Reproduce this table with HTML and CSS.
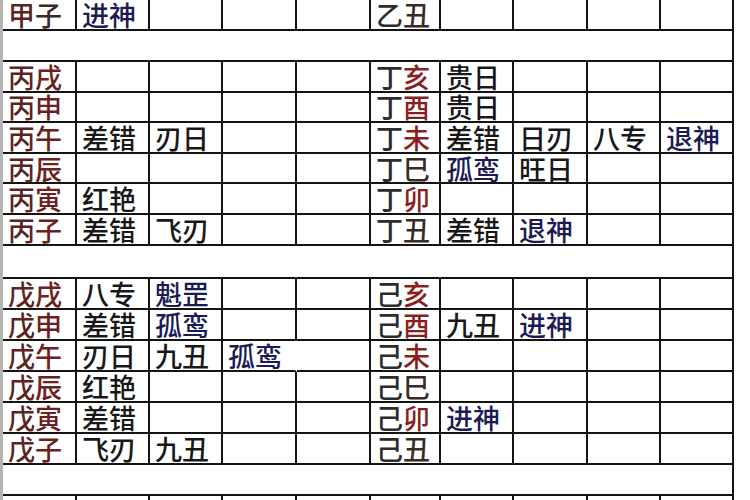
FILE: index.html
```html
<!DOCTYPE html>
<html lang="zh-CN">
<head>
<meta charset="utf-8">
<title>日柱神煞表</title>
<link rel="stylesheet" href="styles.css">
</head>
<body>
<div class="sheet">
  <div class="grid">
    <div class="c gz"><span class="sl">甲</span><span class="bd">子</span></div>
    <div class="c v navy">进神</div>
    <div class="c"></div><div class="c"></div><div class="c"></div>
    <div class="c gz"><span class="sr">乙</span><span class="bk">丑</span></div>
    <div class="c"></div><div class="c"></div><div class="c"></div><div class="c"></div>

    <div class="c gap"></div>

    <div class="c gz"><span class="sl">丙</span><span class="bl">戌</span></div>
    <div class="c"></div><div class="c"></div><div class="c"></div><div class="c"></div>
    <div class="c gz"><span class="sr">丁</span><span class="br">亥</span></div>
    <div class="c v">贵日</div><div class="c"></div><div class="c"></div><div class="c"></div>

    <div class="c gz"><span class="sl">丙</span><span class="bl">申</span></div>
    <div class="c"></div><div class="c"></div><div class="c"></div><div class="c"></div>
    <div class="c gz"><span class="sr">丁</span><span class="br">酉</span></div>
    <div class="c v">贵日</div><div class="c"></div><div class="c"></div><div class="c"></div>

    <div class="c gz"><span class="sl">丙</span><span class="bl">午</span></div>
    <div class="c v">差错</div><div class="c v">刃日</div><div class="c"></div><div class="c"></div>
    <div class="c gz"><span class="sr">丁</span><span class="br">未</span></div>
    <div class="c v">差错</div><div class="c v">日刃</div><div class="c v">八专</div><div class="c v navy">退神</div>

    <div class="c gz"><span class="sl">丙</span><span class="bl">辰</span></div>
    <div class="c"></div><div class="c"></div><div class="c"></div><div class="c"></div>
    <div class="c gz"><span class="sr">丁</span><span class="bk">巳</span></div>
    <div class="c v navy">孤鸾</div><div class="c v">旺日</div><div class="c"></div><div class="c"></div>

    <div class="c gz"><span class="sl">丙</span><span class="bl">寅</span></div>
    <div class="c v">红艳</div><div class="c"></div><div class="c"></div><div class="c"></div>
    <div class="c gz"><span class="sr">丁</span><span class="br">卯</span></div>
    <div class="c"></div><div class="c"></div><div class="c"></div><div class="c"></div>

    <div class="c gz"><span class="sl">丙</span><span class="bl">子</span></div>
    <div class="c v">差错</div><div class="c v">飞刃</div><div class="c"></div><div class="c"></div>
    <div class="c gz"><span class="sr">丁</span><span class="bk">丑</span></div>
    <div class="c v">差错</div><div class="c v navy">退神</div><div class="c"></div><div class="c"></div>

    <div class="c gap"></div>

    <div class="c gz"><span class="sl">戊</span><span class="bl">戌</span></div>
    <div class="c v">八专</div><div class="c v navy">魁罡</div><div class="c"></div><div class="c"></div>
    <div class="c gz"><span class="sr">己</span><span class="br">亥</span></div>
    <div class="c"></div><div class="c"></div><div class="c"></div><div class="c"></div>

    <div class="c gz"><span class="sl">戊</span><span class="bl">申</span></div>
    <div class="c v">差错</div><div class="c v navy">孤鸾</div><div class="c"></div><div class="c"></div>
    <div class="c gz"><span class="sr">己</span><span class="br">酉</span></div>
    <div class="c v">九丑</div><div class="c v navy">进神</div><div class="c"></div><div class="c"></div>

    <div class="c gz"><span class="sl">戊</span><span class="bl">午</span></div>
    <div class="c v">刃日</div><div class="c v">九丑</div><div class="c v navy open">孤鸾</div><div class="c"></div>
    <div class="c gz"><span class="sr">己</span><span class="br">未</span></div>
    <div class="c"></div><div class="c"></div><div class="c"></div><div class="c"></div>

    <div class="c gz"><span class="sl">戊</span><span class="bl">辰</span></div>
    <div class="c v">红艳</div><div class="c"></div><div class="c"></div><div class="c"></div>
    <div class="c gz"><span class="sr">己</span><span class="bk">巳</span></div>
    <div class="c"></div><div class="c"></div><div class="c"></div><div class="c"></div>

    <div class="c gz"><span class="sl">戊</span><span class="bl">寅</span></div>
    <div class="c v">差错</div><div class="c"></div><div class="c"></div><div class="c"></div>
    <div class="c gz"><span class="sr">己</span><span class="br">卯</span></div>
    <div class="c v navy">进神</div><div class="c"></div><div class="c"></div><div class="c"></div>

    <div class="c gz"><span class="sl">戊</span><span class="bl">子</span></div>
    <div class="c v">飞刃</div><div class="c v">九丑</div><div class="c"></div><div class="c"></div>
    <div class="c gz"><span class="sr">己</span><span class="bk">丑</span></div>
    <div class="c"></div><div class="c"></div><div class="c"></div><div class="c"></div>

    <div class="c gap"></div>

    <div class="c gz tail"><span class="sl">庚</span><span class="bl">戌</span></div>
    <div class="c v tail">魁罡</div><div class="c v tail">八专</div><div class="c tail"></div><div class="c tail"></div>
    <div class="c gz tail"><span class="sr">辛</span><span class="br">亥</span></div>
    <div class="c tail"></div><div class="c tail"></div><div class="c tail"></div><div class="c tail"></div>
  </div>
</div>
</body>
</html>
```

FILE: styles.css
```css
html, body {
  margin: 0;
  padding: 0;
  background: #ffffff;
  overflow: hidden;
}

.sheet {
  width: 750px;
  height: 500px;
  box-sizing: border-box;
  border-left: 3px solid #b3b3b3;
  background: #ffffff;
  overflow: hidden;
}

.grid {
  display: grid;
  width: 731px;
  grid-template-columns: 74px 73px 73px 74px 74px 70px 73px 74px 73px 73px;
  grid-template-rows: 31px 31px repeat(6, 30.6px) 33px repeat(6, 31px) 31px 31px;
  font-family: "Noto Sans CJK SC", "Noto Sans CJK JP", sans-serif;
  font-size: 27px;
  font-weight: 500;
  color: #161616;
}

.c {
  box-sizing: border-box;
  border-right: 2px solid #141414;
  border-bottom: 2px solid #141414;
  display: flex;
  align-items: center;
  padding-left: 5px;
  line-height: 1;
  white-space: nowrap;
}

.c.gap {
  grid-column: 1 / -1;
}

.c.open {
  border-right-color: transparent;
}

.c.tail {
  align-items: flex-start;
  padding-top: 4px;
}

.v {
  color: #181818;
}

.navy {
  color: #1a1b55;
}

/* stems in left block (reddish brown) */
.sl { color: #5a2424; }
/* branches in left block */
.bl { color: #6c2020; }
/* stems in right block (dark) */
.sr { color: #2c2c2c; }
/* red branches in right block */
.br { color: #8a1e1e; }
/* dark branches */
.bk { color: #3a2a26; }
.bd { color: #3e2626; }
```
